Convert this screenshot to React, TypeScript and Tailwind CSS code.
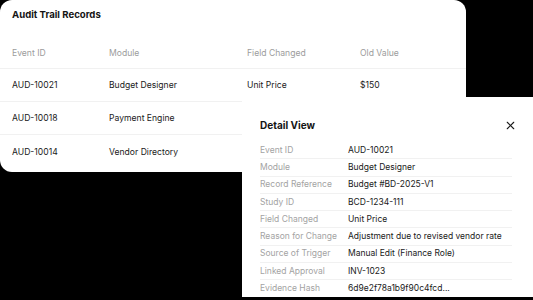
import React from 'react';
import { X } from 'lucide-react';

const rows = [
  { id: 'AUD-10021', module: 'Budget Designer', field: 'Unit Price', old: '$150' },
  { id: 'AUD-10018', module: 'Payment Engine', field: '', old: '' },
  { id: 'AUD-10014', module: 'Vendor Directory', field: '', old: '' },
];

const details = [
  ['Event ID', 'AUD-10021'],
  ['Module', 'Budget Designer'],
  ['Record Reference', 'Budget #BD-2025-V1'],
  ['Study ID', 'BCD-1234-111'],
  ['Field Changed', 'Unit Price'],
  ['Reason for Change', 'Adjustment due to revised vendor rate'],
  ['Source of Trigger', 'Manual Edit (Finance Role)'],
  ['Linked Approval', 'INV-1023'],
  ['Evidence Hash', '6d9e2f78a1b9f90c4fcd...'],
];

const cols = 'grid grid-cols-[97px_138px_113px_1fr] px-3';

export default function App() {
  return (
    <div className="relative w-[533px] h-[300px] overflow-hidden bg-black font-['Inter',sans-serif]">
      {/* records table */}
      <div className="w-[466px] h-[172px] rounded-xl bg-white">
        <div className="h-[30px] flex items-center px-3 text-[9.6px] font-bold text-[#141414]">
          Audit Trail Records
        </div>
        <div className={`${cols} h-[39px] pt-[8px] items-center border-b border-[#f1f1f1] text-[8.6px] text-[#9c9c9c]`}>
          <span>Event ID</span>
          <span>Module</span>
          <span>Field Changed</span>
          <span>Old Value</span>
        </div>
        {rows.map((r, i) => (
          <div
            key={r.id}
            className={`${cols} h-[33px] pt-[1px] items-center text-[8.6px] text-[#1a1a1a] ${i < rows.length - 1 ? 'border-b border-[#f1f1f1]' : ''}`}
          >
            <span>{r.id}</span>
            <span>{r.module}</span>
            <span>{r.field}</span>
            <span>{r.old}</span>
          </div>
        ))}
      </div>

      {/* detail overlay */}
      <div className="absolute left-[242px] top-[97px] w-[300px] h-[200px] bg-white pl-[18px] pr-[30px]">
        <div className="flex items-center justify-between pt-[18px] h-[38px]">
          <span className="text-[10px] font-bold text-[#141414] leading-5">Detail View</span>
          <X className="w-[13px] h-[13px] text-[#1a1a1a] mr-[-5px]" strokeWidth={2} />
        </div>
        <div className="mt-[7px] divide-y divide-[#f1f1f1]">
          {details.map(([label, value]) => (
            <div key={label} className="flex items-center h-[17.25px] text-[8.5px]">
              <span className="w-[88px] shrink-0 text-[#a3a3a3]">{label}</span>
              <span className="text-[#1a1a1a] whitespace-nowrap">{value}</span>
            </div>
          ))}
        </div>
      </div>
    </div>
  );
}
